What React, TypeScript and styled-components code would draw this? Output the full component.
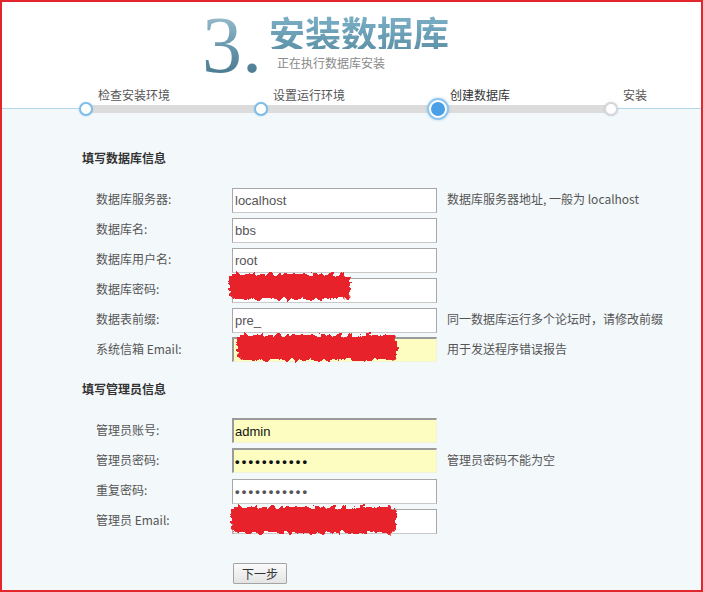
import React from "react";
import styled, { createGlobalStyle } from "styled-components";

const Global = createGlobalStyle`
  html, body { margin: 0; padding: 0; background: #fff; }
  body { font-family: "Noto Sans CJK SC", "Noto Sans", sans-serif; }
  * { box-sizing: border-box; }
`;

const Frame = styled.div`
  width: 703px;
  height: 592px;
  border: 2px solid #e3262b;
  overflow: hidden;
  display: flex;
  flex-direction: column;
  background: #f3f8fb;
`;

const Header = styled.header`
  height: 107px;
  flex-shrink: 0;
  background: #fff;
  border-bottom: 1px solid #b3d6ea;
  display: flex;
  flex-direction: column;
`;

const Brand = styled.div`
  height: 85px;
  flex-shrink: 0;
  display: flex;
  align-items: flex-start;
  padding-left: 200px;
  gap: 7px;
`;

const BigNumber = styled.div`
  font-family: "Liberation Serif", "DejaVu Serif", serif;
  font-size: 80px;
  line-height: 80px;
  margin-top: 3px;
  background: linear-gradient(180deg, #a9c9d8 0%, #6f9db3 45%, #3f6f86 100%);
  -webkit-background-clip: text;
  background-clip: text;
  color: transparent;
`;

const TitleCol = styled.div`
  display: flex;
  flex-direction: column;
  padding-top: 13px;
`;

const Title = styled.h1`
  margin: 0;
  font-size: 36px;
  line-height: 34px;
  font-weight: 700;
  background: linear-gradient(180deg, #7cb0c6 0%, #5f93aa 100%);
  -webkit-background-clip: text;
  background-clip: text;
  color: transparent;
`;

const Subtitle = styled.div`
  margin-top: 7px;
  margin-left: 8px;
  font-size: 12px;
  line-height: 14px;
  color: #8a8a8a;
`;

const Steps = styled.ol`
  position: relative;
  z-index: 1;
  flex-shrink: 0;
  list-style: none;
  margin: 0;
  padding: 0 0 0 77px;
  display: grid;
  grid-template-columns: 175px 177px 173px 80px;
  &::before {
    content: "";
    position: absolute;
    left: 84px;
    width: 525px;
    top: 18px;
    height: 8px;
    background: #dcdcdc;
  }
`;

const Step = styled.li`
  display: flex;
  flex-direction: column;
`;

const StepLabel = styled.span<{ $current?: boolean }>`
  padding-left: 19px;
  height: 16px;
  line-height: 16px;
  font-size: 12px;
  white-space: nowrap;
  color: ${(p) => (p.$current ? "#333" : "#555")};
`;

const DotRow = styled.div`
  position: relative;
  height: 18px;
  margin-top: -3px;
  display: flex;
  align-items: center;
`;

const Dot = styled.span<{ $state: "done" | "current" | "todo" }>`
  display: block;
  border-radius: 50%;
  ${(p) =>
    p.$state === "current"
      ? `
    width: 18px; height: 18px; margin-left: -2px;
    background: #4b9fe6;
    border: 2px solid #fff;
    box-shadow: 0 0 0 2px #8fc6ee, 0 0 3px 2px rgba(120,180,230,.5);
  `
      : `
    width: 14px; height: 14px;
    background: #fff;
    border: 2px solid ${p.$state === "done" ? "#7fbde7" : "#d6d6d6"};
    box-shadow: 0 0 2px rgba(120,180,230,.45);
  `}
`;

const Body = styled.main`
  flex: 1;
  padding: 39px 0 0 80px;
  background: #f3f8fb;
`;

const SectionTitle = styled.h2<{ $spaced?: boolean }>`
  margin: ${(p) => (p.$spaced ? "16px" : "0")} 0 15px 0;
  font-size: 12px;
  line-height: 20px;
  font-weight: 700;
  color: #333;
`;

const Row = styled.div`
  display: flex;
  align-items: center;
  height: 30px;
  padding-left: 14px;
`;

const Label = styled.label`
  width: 136px;
  flex-shrink: 0;
  font-size: 12px;
  color: #555;
  white-space: nowrap;
`;

const Field = styled.div`
  position: relative;
  width: 205px;
  height: 25px;
  flex-shrink: 0;
`;

const Input = styled.input<{ $filled?: boolean; $dark?: boolean }>`
  width: 100%;
  height: 100%;
  margin: 0;
  padding: 0 0 0 2px;
  font-family: "Liberation Sans", Arial, sans-serif;
  font-size: 13px;
  color: ${(p) => (p.$dark ? "#111" : "#555")};
  outline: none;
  ${(p) =>
    p.$filled
      ? `
    background: #fdfdc1;
    border-top: 2px solid #9a9a9a;
    border-left: 2px solid #9a9a9a;
    border-right: 1px solid #f3f3d8;
    border-bottom: 1px solid #f3f3d8;
    padding-left: 1px;
  `
      : `
    background: #fff;
    border: 1px solid #a7a7a7;
    border-bottom-color: #c9c9c9;
  `}
  &[type="password"] {
    letter-spacing: 2.2px;
    font-weight: 700;
  }
`;

const Hint = styled.span`
  margin-left: 10px;
  font-size: 12px;
  color: #555;
  white-space: nowrap;
`;

const Scribble = styled.div<{ $l: number; $t: number; $w: number; $h: number }>`
  position: absolute;
  left: ${(p) => p.$l}px;
  top: ${(p) => p.$t}px;
  width: ${(p) => p.$w}px;
  height: ${(p) => p.$h}px;
  background: #e8232a;
  border-radius: 6px;
  filter: url(#rough);
`;

const Submit = styled.button`
  margin: 29px 0 0 151px;
  width: 54px;
  height: 21px;
  padding: 0;
  font-family: "Noto Sans CJK SC", sans-serif;
  font-size: 12px;
  color: #333;
  border: 1px solid #a3a3a3;
  background: linear-gradient(180deg, #fbfbfb 0%, #e4e4e4 100%);
  border-radius: 1px;
`;

type RowDef = {
  label: string;
  value: string;
  type?: string;
  filled?: boolean;
  dark?: boolean;
  hint?: string;
  scribble?: [number, number, number, number];
};

const dbRows: RowDef[] = [
  { label: "数据库服务器:", value: "localhost", hint: "数据库服务器地址, 一般为 localhost" },
  { label: "数据库名:", value: "bbs" },
  { label: "数据库用户名:", value: "root" },
  { label: "数据库密码:", value: "", scribble: [-3, -2, 121, 25] },
  { label: "数据表前缀:", value: "pre_", hint: "同一数据库运行多个论坛时，请修改前缀" },
  { label: "系统信箱 Email:", value: "", filled: true, hint: "用于发送程序错误报告", scribble: [5, -1, 160, 25] },
];

const adminRows: RowDef[] = [
  { label: "管理员账号:", value: "admin", filled: true, dark: true },
  { label: "管理员密码:", value: "aaaaaaaaaaa", type: "password", filled: true, dark: true, hint: "管理员密码不能为空" },
  { label: "重复密码:", value: "aaaaaaaaaaa", type: "password" },
  { label: "管理员 Email:", value: "", scribble: [-1, 0, 165, 26] },
];

const steps: { label: string; state: "done" | "current" | "todo" }[] = [
  { label: "检查安装环境", state: "done" },
  { label: "设置运行环境", state: "done" },
  { label: "创建数据库", state: "current" },
  { label: "安装", state: "todo" },
];

function FormRow({ r }: { r: RowDef }) {
  return (
    <Row>
      <Label>{r.label}</Label>
      <Field>
        <Input
          type={r.type ?? "text"}
          defaultValue={r.value}
          readOnly
          $filled={r.filled}
          $dark={r.dark}
        />
        {r.scribble && (
          <Scribble $l={r.scribble[0]} $t={r.scribble[1]} $w={r.scribble[2]} $h={r.scribble[3]} />
        )}
      </Field>
      {r.hint && <Hint>{r.hint}</Hint>}
    </Row>
  );
}

export default function App() {
  return (
    <>
      <Global />
      <svg width="0" height="0" style={{ position: "absolute" }} aria-hidden>
        <filter id="rough" x="-10%" y="-25%" width="120%" height="150%">
          <feTurbulence type="fractalNoise" baseFrequency="0.18" numOctaves="3" seed="5" result="n" />
          <feDisplacementMap in="SourceGraphic" in2="n" scale="9" xChannelSelector="R" yChannelSelector="G" />
        </filter>
      </svg>
      <Frame>
        <Header>
          <Brand>
            <BigNumber>3.</BigNumber>
            <TitleCol>
              <Title>安装数据库</Title>
              <Subtitle>正在执行数据库安装</Subtitle>
            </TitleCol>
          </Brand>
          <Steps>
            {steps.map((s) => (
              <Step key={s.label}>
                <StepLabel $current={s.state === "current"}>{s.label}</StepLabel>
                <DotRow>
                  <Dot $state={s.state} />
                </DotRow>
              </Step>
            ))}
          </Steps>
        </Header>
        <Body>
          <SectionTitle>填写数据库信息</SectionTitle>
          {dbRows.map((r) => (
            <FormRow key={r.label} r={r} />
          ))}
          <SectionTitle $spaced>填写管理员信息</SectionTitle>
          {adminRows.map((r) => (
            <FormRow key={r.label} r={r} />
          ))}
          <Submit type="button">下一步</Submit>
        </Body>
      </Frame>
    </>
  );
}
